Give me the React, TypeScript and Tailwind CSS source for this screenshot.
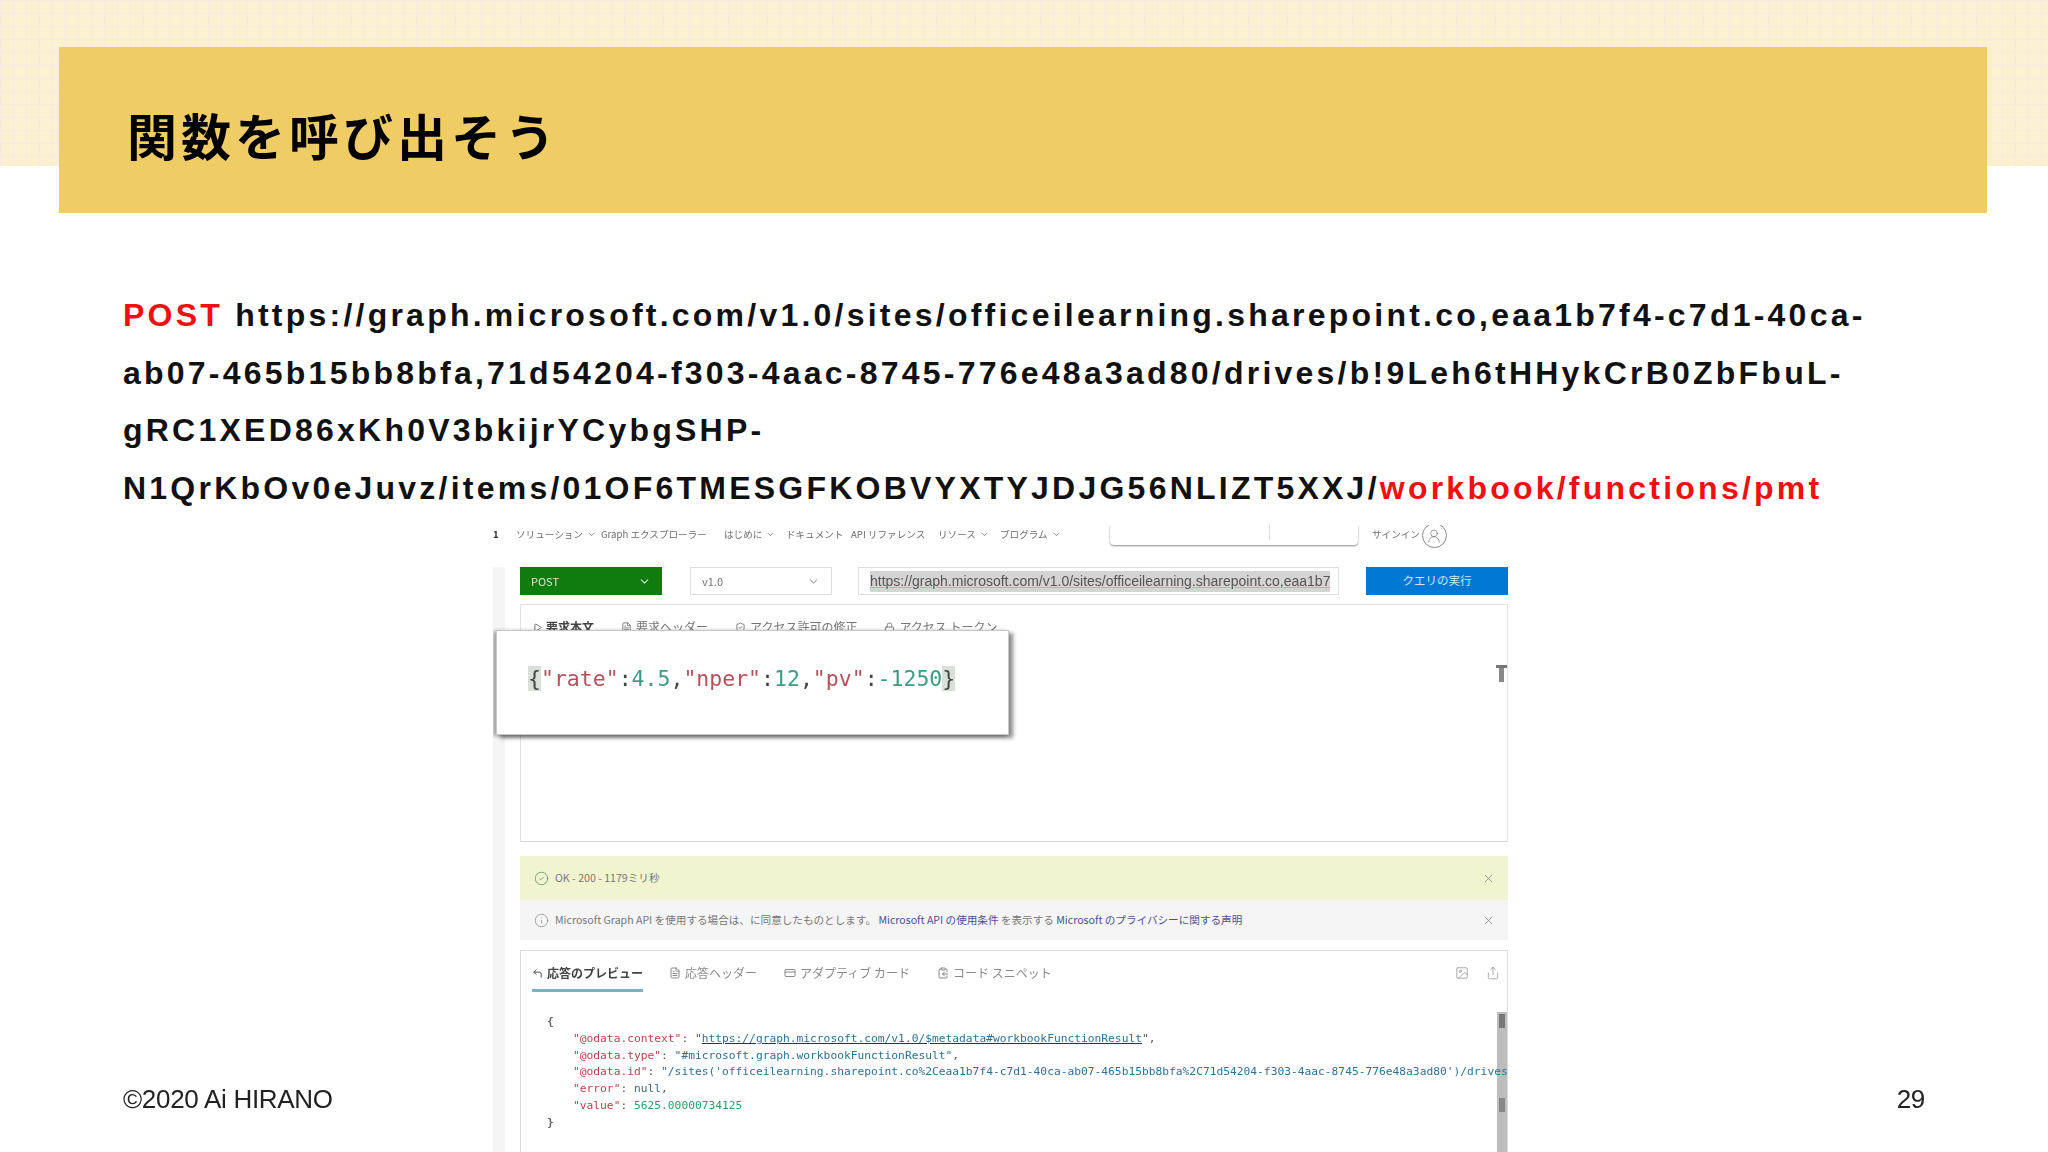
import { ChevronDown, CircleCheck, Info, X, CornerUpLeft, FileText, CreditCard, ClipboardCopy, Share, UserRound, Image, Play, Lock, ShieldCheck } from 'lucide-react';

const sans = "font-['Liberation_Sans','Noto_Sans_CJK_JP',sans-serif]";
const ui = "font-['Noto_Sans_CJK_JP','Noto_Sans',sans-serif]";
const mono = "font-['DejaVu_Sans_Mono','Liberation_Mono',monospace]";

function NavBar() {
  return (
    <div className={`relative h-[42px] flex items-start pt-[2px] text-[9.6px] text-[#6f6f6f] whitespace-nowrap ${ui}`}>
      <span className="w-[23px] font-bold text-[#333]">1</span>
      <span className="w-[85px] flex items-center gap-1">ソリューション<ChevronDown size={9} /></span>
      <span className="w-[123px]">Graph エクスプローラー</span>
      <span className="w-[62px] flex items-center gap-1">はじめに<ChevronDown size={9} /></span>
      <span className="w-[65px]">ドキュメント</span>
      <span className="w-[87px]">API リファレンス</span>
      <span className="w-[62px] flex items-center gap-1">リソース<ChevronDown size={9} /></span>
      <span className="w-[110px] flex items-center gap-1">プログラム<ChevronDown size={9} /></span>
      <div className="w-[248px] h-[20px] -mt-[2px] bg-white rounded-b-sm shadow-[0_1px_2px_rgba(0,0,0,0.45)] flex items-start">
        <div className="w-[160px] h-[15px] border-r border-[#ddd]" />
      </div>
      <span className="ml-[14px]">サインイン</span>
      <span className="ml-[2px] -mt-[4px] w-[25px] h-[25px] rounded-full border border-[#888] flex items-center justify-center">
        <UserRound size={16} strokeWidth={1} />
      </span>
    </div>
  );
}

function RequestBar() {
  return (
    <div className={`h-[28px] flex gap-[28px] ${ui}`}>
      <div className="w-[142px] bg-[#107c10] text-[#d5e8d5] text-[11px] flex items-center justify-between px-[11px]">
        POST
        <ChevronDown size={13} />
      </div>
      <div className="w-[142px] border border-[#ddd] text-[#777] text-[11px] flex items-center justify-between px-[11px]">
        v1.0
        <ChevronDown size={13} className="text-[#aaa]" />
      </div>
      <div className={`w-[481px] -ml-[2px] border border-[#ddd] flex items-center px-[11px] overflow-hidden text-[14px] text-[#555] ${sans}`}>
        <span className="bg-[#d4d4d4] whitespace-nowrap underline decoration-[#e3a3a3]">https://graph.microsoft.com/v1.0/sites/officeilearning.sharepoint.co,eaa1b7</span>
      </div>
      <div className="w-[142px] -ml-[1px] bg-[#0078d4] text-[#cfe6f7] text-[11.5px] flex items-center justify-center">クエリの実行</div>
    </div>
  );
}

function RequestPanel() {
  return (
    <div className="relative mt-[9px] h-[238px] border border-[#e2e2e2] border-b-[#d8d8d8]">
      <div className={`flex gap-[27px] items-center pt-[13px] pl-[12px] text-[12px] text-[#777] ${ui}`}>
        <span className="flex items-center gap-1 font-bold text-[#444]"><Play size={9} />要求本文</span>
        <span className="flex items-center gap-1"><FileText size={11} />要求ヘッダー</span>
        <span className="flex items-center gap-1"><ShieldCheck size={11} />アクセス許可の修正</span>
        <span className="flex items-center gap-1"><Lock size={11} />アクセス トークン</span>
      </div>
      <div className="absolute right-0 top-[60px] w-[11px] h-[17px] border-t-[3px] border-[#777] flex justify-center">
        <div className="w-[5px] bg-[#888]" />
      </div>
    </div>
  );
}

function Notices() {
  return (
    <div className={`mt-[14px] text-[10.6px] text-[#777] ${ui}`}>
      <div className="h-[44px] bg-[#f0f5d0] flex items-center px-[14px] gap-[6px]">
        <CircleCheck size={15} strokeWidth={1.3} className="text-[#5d9a6d]" />
        <span className="flex-1">OK - 200 - 1179ミリ秒</span>
        <X size={13} strokeWidth={1.3} className="mr-[-1px]" />
      </div>
      <div className="h-[40px] bg-[#f5f5f5] flex items-center px-[14px] gap-[6px] whitespace-nowrap">
        <Info size={15} strokeWidth={1} />
        <span className="flex-1">
          Microsoft Graph API を使用する場合は、に同意したものとします。{' '}
          <span className="text-[#4b4f96]">Microsoft API の使用条件</span> を表示する <span className="text-[#4b4f96]">Microsoft のプライバシーに関する声明</span>
        </span>
        <X size={13} strokeWidth={1.3} className="mr-[-1px]" />
      </div>
    </div>
  );
}

function ResponsePanel() {
  return (
    <div className="relative mt-[10px] flex-1 border border-[#dcdcdc] border-b-0 overflow-hidden">
      <div className={`h-[61px] flex items-start pl-[11px] pr-[7px] pt-[13px] gap-[27px] text-[12px] text-[#8a8a8a] ${ui}`}>
        <span className="h-[28px] flex items-start gap-1 font-bold text-[#444] border-b-[3px] border-[#7fb0c4] -mr-[1px]"><CornerUpLeft size={11} className="mt-[4px]" />応答のプレビュー</span>
        <span className="flex items-center gap-1"><FileText size={12} />応答ヘッダー</span>
        <span className="flex items-center gap-1"><CreditCard size={12} />アダプティブ カード</span>
        <span className="flex items-center gap-1"><ClipboardCopy size={12} />コード スニペット</span>
        <span className="flex-1" />
        <Image size={14} strokeWidth={1.2} className="mt-[2px]" />
        <Share size={14} strokeWidth={1.2} className="mt-[2px] -ml-[10px]" />
      </div>
      <div className={`relative z-10 pl-[26px] mt-[2px] text-[11.25px] leading-[16.8px] whitespace-nowrap text-[#555] ${mono}`}>
        <div className="text-[#666] font-bold">{'{'}</div>
        <div className="pl-[26px]">
          <span className="text-[#b5434f]">"@odata.context"</span>: "<span className="text-[#2d7296] underline decoration-[#333]">https://graph.microsoft.com/v1.0/$metadata#workbookFunctionResult</span>",
        </div>
        <div className="pl-[26px]">
          <span className="text-[#b5434f]">"@odata.type"</span>: <span className="text-[#2d7296]">"#microsoft.graph.workbookFunctionResult"</span>,
        </div>
        <div className="pl-[26px]">
          <span className="text-[#b5434f]">"@odata.id"</span>: <span className="text-[#2d7296]">"/sites('officeilearning.sharepoint.co%2Ceaa1b7f4-c7d1-40ca-ab07-465b15bb8bfa%2C71d54204-f303-4aac-8745-776e48a3ad80')/drives</span>
        </div>
        <div className="pl-[26px]"><span className="text-[#b5434f]">"error"</span>: <span className="text-[#3b6a8a]">null</span>,</div>
        <div className="pl-[26px]"><span className="text-[#b5434f]">"value"</span>: <span className="text-[#2f9a6a]">5625.00000734125</span></div>
        <div className="text-[#666] font-bold">{'}'}</div>
      </div>
      <div className="absolute right-0 top-[61px] bottom-0 w-[10px] bg-[#bdbdbd]">
        <div className="mx-auto mt-[2px] w-[6px] h-[14px] bg-[#777]" />
        <div className="mx-auto mt-[70px] w-[6px] h-[14px] bg-[#888]" />
      </div>
    </div>
  );
}

export default function App() {
  return (
    <div className="relative w-[2048px] h-[1152px] overflow-hidden bg-white">
      {/* checked strip behind the title */}
      <div className="absolute inset-x-0 top-0 h-[166px] bg-[#fbf0cf] bg-[linear-gradient(#f8e9e2_1px,transparent_1px),linear-gradient(90deg,#f8e9e2_1px,transparent_1px)] bg-[size:13px_13px]" />

      <div className="relative ml-[59px] mt-[47px] w-[1928px] h-[166px] bg-[#f0cd64] flex items-center pl-[68px]">
        <h1 className="pt-[8px] text-[50px] leading-none font-bold tracking-[4px] text-black font-['Noto_Sans_CJK_JP',sans-serif]">関数を呼び出そう</h1>
      </div>

      <div className={`relative mt-[74px] ml-[123px] text-[32px] leading-[57.5px] font-bold tracking-[3.23px] text-[#111] whitespace-nowrap ${sans}`}>
        <div><span className="text-[#f01010]">POST</span> https://graph.microsoft.com/v1.0/sites/officeilearning.sharepoint.co,eaa1b7f4-c7d1-40ca-</div>
        <div>ab07-465b15bb8bfa,71d54204-f303-4aac-8745-776e48a3ad80/drives/b!9Leh6tHHykCrB0ZbFbuL-</div>
        <div>gRC1XED86xKh0V3bkijrYCybgSHP-</div>
        <div>N1QrKbOv0eJuvz/items/01OF6TMESGFKOBVYXTYJDJG56NLIZT5XXJ/<span className="text-[#f01010]">workbook/functions/pmt</span></div>
      </div>

      {/* pasted Graph Explorer capture */}
      <div className="relative mt-[8px] ml-[493px] w-[1017px] h-[627px] overflow-hidden">
        <div className="h-full flex flex-col blur-[0.6px]">
          <NavBar />
          <div className="flex-1 flex min-h-0">
            <div className="w-[12px] bg-[#f5f5f5]" />
            <div className="w-[15px]" />
            <div className="flex-1 min-w-0 flex flex-col pr-[2px]">
              <RequestBar />
              <RequestPanel />
              <Notices />
              <ResponsePanel />
            </div>
          </div>
        </div>

        <div className="absolute left-[3px] top-[105px] w-[513px] h-[105px] bg-white border border-[#c8c8c8] shadow-[4px_3px_4px_rgba(0,0,0,0.45),-3px_1px_4px_rgba(0,0,0,0.35)] flex items-center pl-[31px] pb-[8px] blur-[0.4px]">
          <span className={`text-[21.5px] leading-none whitespace-nowrap text-[#444] ${mono}`}>
            <span className="bg-[#d9dfd9]">{'{'}</span>
            <span className="text-[#b5505a]">"rate"</span>:<span className="text-[#3d9c84]">4.5</span>,
            <span className="text-[#b5505a]">"nper"</span>:<span className="text-[#3d9c84]">12</span>,
            <span className="text-[#b5505a]">"pv"</span>:<span className="text-[#3d9c84]">-1250</span>
            <span className="bg-[#d9dfd9]">{'}'}</span>
          </span>
        </div>
      </div>

      <div className={`absolute left-[123px] right-[123px] bottom-[38px] flex justify-between text-[26px] leading-[30px] tracking-[-0.3px] text-[#222] ${sans}`}>
        <span>©2020 Ai HIRANO</span>
        <span>29</span>
      </div>
    </div>
  );
}
